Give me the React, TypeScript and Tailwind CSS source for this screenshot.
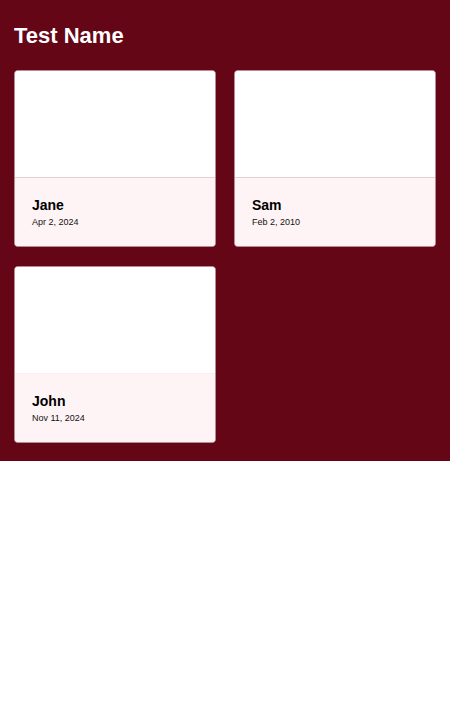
const people = [
  { name: 'Jane', date: 'Apr 2, 2024', divider: true },
  { name: 'Sam', date: 'Feb 2, 2010', divider: true },
  { name: 'John', date: 'Nov 11, 2024', divider: false },
];

const Card = ({ name, date, divider }: { name: string; date: string; divider: boolean }) => (
  <div className="rounded-[4px] border border-[#b88a93] overflow-hidden bg-white">
    <div className="h-[106px] bg-white" />
    <div className={`h-[69px] bg-[#fff4f5] px-[17px] pt-[18px] ${divider ? 'border-t border-[#e6cfd3]' : 'border-t border-[#fbeef0]'}`}>
      <div className="text-[14px] font-bold leading-[18px] text-black">{name}</div>
      <div className="text-[9px] leading-[12px] mt-[2px] text-[#111]">{date}</div>
    </div>
  </div>
);

export default function App() {
  return (
    <div className="min-h-[720px] bg-white" style={{ fontFamily: '"Liberation Sans", Arial, sans-serif' }}>
      <section className="bg-[#650617] px-[14px] pt-[21px] pb-[18px]">
        <h1 className="text-[22px] leading-[30px] font-bold text-white mb-[19px]">Test Name</h1>
        <div className="grid grid-cols-2 gap-x-[18px] gap-y-[19px]">
          {people.map((p) => (
            <Card key={p.name} {...p} />
          ))}
        </div>
      </section>
    </div>
  );
}
